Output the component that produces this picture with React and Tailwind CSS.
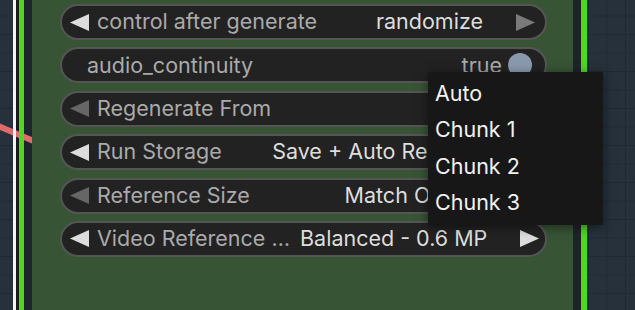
import React from "react";

const rows = [
  { label: "control after generate", value: "randomize", left: "on", right: "dim" },
  { label: "audio_continuity", value: "true", toggle: true },
  { label: "Regenerate From", value: "Auto", left: "off", right: "off" },
  { label: "Run Storage", value: "Save + Auto Resume", left: "on", right: "on" },
  { label: "Reference Size", value: "Match Output", left: "off", right: "off" },
  { label: "Video Reference …", value: "Balanced - 0.6 MP", left: "on", right: "on" },
];

const arrowColor = {
  on: "fill-[#dddddd]",
  dim: "fill-[#7a7a7a]",
  off: "fill-[#666666]",
};

function Arrow({ dir, state }) {
  return (
    <svg width="19" height="17" viewBox="0 0 19 17" className={"shrink-0 " + arrowColor[state]}>
      {dir === "left" ? <polygon points="0,8.5 19,0 19,17" /> : <polygon points="19,8.5 0,0 0,17" />}
    </svg>
  );
}

function Row({ row }) {
  if (row.toggle) {
    return (
      <div className="flex h-9 items-center rounded-full border-2 border-[#555555] bg-[#222222] pl-[25px] pr-[13px]">
        <span className="flex-1 text-[#aaaaaa]">{row.label}</span>
        <span className="text-[#aaaaaa]">{row.value}</span>
        <span className="ml-[6px] h-[24px] w-[24px] rounded-full bg-[#8a9aae]" />
      </div>
    );
  }
  return (
    <div className="flex h-9 items-center rounded-full border-2 border-[#555555] bg-[#222222] pl-[8px] pr-[10px]">
      <Arrow dir="left" state={row.left} />
      <span className="ml-[8px] whitespace-nowrap text-[#aaaaaa]">{row.label}</span>
      <span className="ml-auto pl-[10px] whitespace-nowrap text-[#dddddd]">{row.value}</span>
      <span className="ml-[33px]">
        <Arrow dir="right" state={row.right} />
      </span>
    </div>
  );
}

const App = () => {
  return (
    <div
      className="relative flex h-[310px] w-[635px] overflow-hidden bg-[#26313b] bg-[linear-gradient(#202a33_1px,transparent_1px),linear-gradient(90deg,#202a33_1px,transparent_1px)] bg-[size:18.5px_18.5px] bg-[position:-4px_-3px] text-[21.5px] leading-none"
      style={{ fontFamily: "Inter, 'Noto Sans', sans-serif" }}
    >
      <svg className="absolute left-0 top-0" width="40" height="310">
        <line x1="-2" y1="126" x2="36" y2="142" stroke="#e06b6b" strokeWidth="6" />
      </svg>
      <div className="w-[13px] shrink-0" />
      <div className="relative w-[3px] shrink-0 bg-[#f4f4f4]" />
      <div className="w-[3px] shrink-0 bg-[#161c21]" />
      <div className="relative w-[5px] shrink-0 bg-[#4fd81f]" />
      <div className="w-[8px] shrink-0 bg-[#1e262d]" />
      <div className="relative w-[541px] shrink-0 bg-[#375435] pl-[28px] pr-[26px] pt-[4px]">
        <div className="flex flex-col gap-[7.4px]">
          {rows.map((row) => (
            <Row key={row.label} row={row} />
          ))}
        </div>
      </div>
      <div className="w-[8px] shrink-0 bg-[#1c242b]" />
      <div className="w-[6px] shrink-0 bg-[#4fd81f]" />

      <div className="absolute left-[428px] top-[72px] flex w-[175px] flex-col bg-[#171717] pt-[3px] pb-[4px] shadow-[0_2px_10px_rgba(0,0,0,0.5)]">
        {["Auto", "Chunk 1", "Chunk 2", "Chunk 3"].map((item) => (
          <div key={item} className="flex h-[36.5px] items-center px-[7px] text-[#f2f2f2]">
            {item}
          </div>
        ))}
      </div>
    </div>
  );
};

export default App;
